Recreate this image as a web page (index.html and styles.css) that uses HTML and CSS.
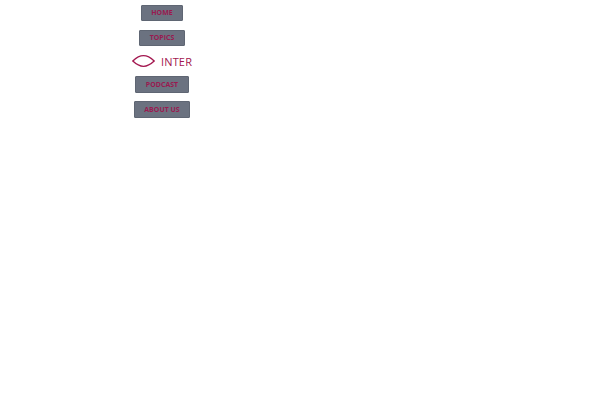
FILE: index.html
```html
<!DOCTYPE html>
<html lang="en">
<head>
<meta charset="utf-8">
<title>Inter</title>
<link rel="stylesheet" href="styles.css">
</head>
<body>
<nav class="nav">
  <a class="btn">HOME</a>
  <a class="btn btn-topics">TOPICS</a>
  <div class="logo">
    <svg class="logo-icon" width="23" height="12" viewBox="0 0 23 12" fill="none"><path d="M.8 6C5 2 8 .7 11.5 .7S18 2 22.2 6C18 10 15 11.3 11.5 11.3S5 10 .8 6Z" stroke="#a3174f" stroke-width="1.3"/></svg>
    <span class="logo-text">INTER</span>
  </div>
  <a class="btn btn-podcast">PODCAST</a>
  <a class="btn btn-about">ABOUT US</a>
</nav>
</body>
</html>
```
FILE: styles.css
```css
html, body { margin: 0; padding: 0; background: #fff; }
body { font-family: "Open Sans", "Noto Sans", sans-serif; }
.nav {
  width: 324px;
  padding-top: 4.5px;
  display: flex;
  flex-direction: column;
  align-items: center;
}
.btn {
  box-sizing: border-box;
  height: 16.5px;
  display: flex;
  align-items: center;
  justify-content: center;
  background: #6b7280;
  border: 1px solid #5f6673;
  border-radius: 1px;
  color: #9a1a50;
  font-size: 7px;
  font-weight: 700;
  white-space: nowrap;
  width: 42px;
  margin-bottom: 8.5px;
}
.btn-topics { width: 46px; margin-bottom: 0; }
.btn-podcast { width: 54px; }
.btn-about { width: 56px; margin-bottom: 0; }
.logo {
  height: 30px;
  width: 60px;
  display: flex;
  align-items: center;
  gap: 6px;
}
.logo-icon { flex: none; }
.logo-text { color: #a3174f; font-size: 11px; font-weight: 500; letter-spacing: 0.15px; line-height: 1; }
```
